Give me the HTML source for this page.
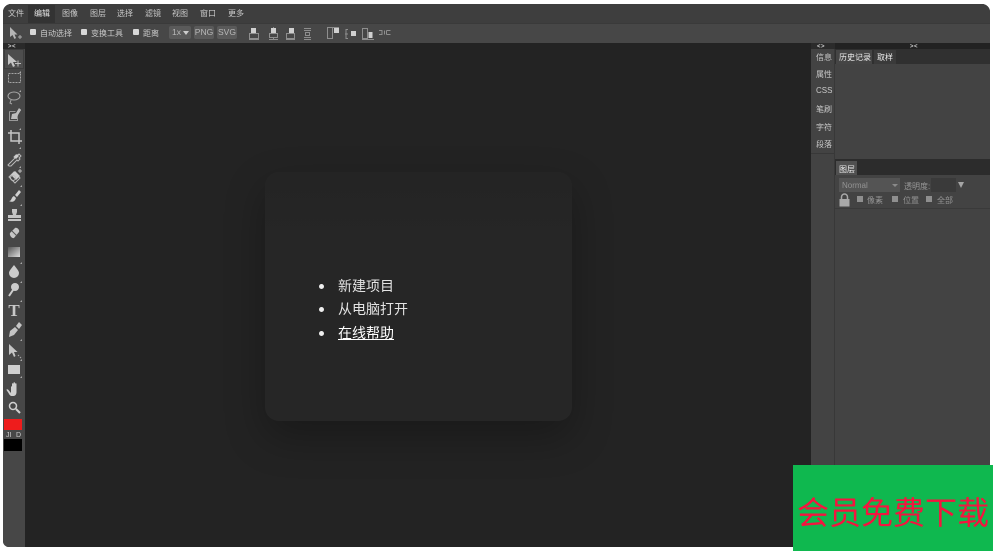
<!DOCTYPE html>
<html lang="zh"><head><meta charset="utf-8"><title>Photopea</title>
<style>
html,body{margin:0;padding:0;background:#fff;width:993px;height:551px;overflow:hidden}
body{position:relative;font-family:"Liberation Sans","Noto Sans CJK SC",sans-serif}
#app{position:absolute;left:3px;top:4px;width:987px;height:543px;background:#232323;border-radius:8px 8px 6px 6px;overflow:hidden}
.a{position:absolute;white-space:nowrap}
.t{position:absolute;white-space:nowrap;font-size:8px;line-height:12px;color:#cacaca;filter:blur(.3px);margin-top:.5px}
.cb{position:absolute;width:6px;height:6px;background:#d8d8d8;border-radius:1px}
.cb2{position:absolute;width:6px;height:6px;background:#8f8f8f}
svg{position:absolute;overflow:visible}
.btn{position:absolute;top:22px;height:13px;background:#5a5a5a;border-radius:2px;color:#b8b8b8;font-size:8.5px;line-height:13px;text-align:center;filter:blur(.3px)}
.arr{position:absolute;font-size:6px;line-height:6px;color:#ccc;font-weight:bold;letter-spacing:.5px}
.dot{position:absolute;left:54px;width:5px;height:5px;border-radius:50%;background:#eee}
.li{position:absolute;left:73px;font-size:14px;line-height:20px;color:#e4e4e4;white-space:nowrap}
</style></head><body>
<div id="app">
<!-- menu -->
<div class="a" style="left:0;top:0;width:987px;height:19px;background:#3e3e3e"></div>
<div class="a" style="left:25px;top:1px;width:27px;height:18px;background:#333"></div>
<div class="t" style="left:5px;top:3px">文件</div>
<div class="t" style="left:31px;top:3px;color:#e6e6e6">编辑</div>
<div class="t" style="left:59px;top:3px">图像</div>
<div class="t" style="left:87px;top:3px">图层</div>
<div class="t" style="left:114px;top:3px">选择</div>
<div class="t" style="left:142px;top:3px">滤镜</div>
<div class="t" style="left:169px;top:3px">视图</div>
<div class="t" style="left:197px;top:3px">窗口</div>
<div class="t" style="left:225px;top:3px">更多</div>
<!-- options -->
<div class="a" style="left:0;top:19px;width:987px;height:20px;background:#474747;border-top:1px solid #3a3a3a;box-sizing:border-box"></div>
<svg style="left:6px;top:23px;filter:blur(.3px)" width="14" height="13"><path d="M1 0 L1 10 L3.500 8 L5.500 12 L7 11 L5.500 7.500 L8.500 7.500 Z" fill="#b5b5b5"/><path d="M9 10h4M11 8v4" stroke="#aaa" fill="none"/></svg>
<div class="cb" style="left:27px;top:25px"></div><div class="t" style="left:37px;top:23px">自动选择</div>
<div class="cb" style="left:78px;top:25px"></div><div class="t" style="left:88px;top:23px">变换工具</div>
<div class="cb" style="left:130px;top:25px"></div><div class="t" style="left:140px;top:23px">距离</div>
<div class="btn" style="left:166px;width:22px;text-align:left;text-indent:3px">1x<span style="position:absolute;left:14px;top:5px;border:3.500px solid transparent;border-top:4px solid #ccc;border-bottom:0"></span></div>
<div class="btn" style="left:191px;width:20px">PNG</div>
<div class="btn" style="left:214px;width:20px">SVG</div>
<svg style="left:246px;top:23px;filter:blur(.3px)" width="145" height="16" fill="none" stroke="#8e8e8e" stroke-width="1">
<rect x="2" y="1" width="5" height="5" fill="#d0d0d0" stroke="none"/><rect x="0.500" y="6.500" width="9" height="5"/><path d="M0 12.500h10"/>
<rect x="22" y="1" width="5" height="5" fill="#d0d0d0" stroke="none"/><rect x="20.500" y="6.500" width="8" height="4"/><path d="M24.500 0v1M24.500 11v2M20 12.500h9"/>
<rect x="40" y="1" width="5" height="5" fill="#d0d0d0" stroke="none"/><rect x="37.500" y="6.500" width="8" height="5"/><path d="M37 12.500h9"/>
<path d="M55 1.500h7M55 3.500h7M55 10.500h7M55 12.500h7"/><rect x="56.500" y="5.500" width="4" height="3"/>
<rect x="78.500" y="0.500" width="5" height="11"/><path d="M78 0.500h12"/><rect x="85" y="1" width="5" height="5" fill="#d0d0d0" stroke="none"/>
<path d="M99 2.500h-2v9h2M99 7h-3"/><rect x="102" y="4" width="5" height="5" fill="#d0d0d0" stroke="none"/>
<rect x="113.500" y="1.500" width="5" height="10"/><rect x="119.500" y="5" width="4" height="6" fill="#d0d0d0" stroke="none"/><path d="M113 12.500h12"/>
<path d="M130 3.500h3v4h-3M135.500 3.500v4M137.500 3.500h4M137.500 7.500h4M137.500 3.500v4"/>
</svg>
<!-- left tools -->
<div class="a" style="left:0;top:39px;width:22px;height:504px;background:#474747"></div>
<div class="a" style="left:0;top:39px;width:22px;height:6px;background:#2a2a2a"></div>
<div class="arr" style="left:5px;top:40px">&gt;&lt;</div>
<div class="a" style="left:1px;top:45px;width:20px;height:20px;background:#4d4d4d;box-shadow:inset 0 0 0 1px #3d3d3d"></div>
<svg style="left:0;top:45px;filter:blur(.35px)" width="22" height="400" fill="#bdbdbd" stroke="none">
<path d="M5 5 L5 16 L8 13.500 L10 18 L12 17 L10 13 L14 13 Z" fill="#c5c5c5"/><path d="M12 14.500h6M15 11.500v6" stroke="#bdbdbd" fill="none"/>
<rect x="5.500" y="24.500" width="12" height="9" fill="none" stroke="#a5a5a5" stroke-dasharray="2 1"/>
<ellipse cx="11" cy="47" rx="6" ry="4" fill="none" stroke="#a5a5a5"/><path d="M8 51l-1 3 2 1" fill="none" stroke="#a5a5a5"/>
<path d="M8 70l1-5 4-1 3-5 2 2-3 5-1 4z"/><path d="M6.500 62.500h6M6.500 62.500v9h8v-3" fill="none" stroke="#999"/>
<path d="M8 81v11h11M5 84h11v11" fill="none" stroke="#c5c5c5" stroke-width="1.500"/>
<path d="M6 115l-1 1 1 1 2 0 6-6 1 1 2-2-1-1 2-2-2-2-2 2-1-1-2 2 1 1z" fill="none" stroke="#bbb"/><path d="M11 108l3-3 2 2-3 3z" fill="#ccc"/>
<path d="M6 128l5-5 6 6-5 5z" fill="none" stroke="#bbb"/><path d="M8 126l4-4 5 5-4 4z" fill="#ccc"/><path d="M15 122h4M17 120v4" stroke="#bbb"/><circle cx="10" cy="129" r="2.500" fill="none" stroke="#bbb"/>
<path d="M6 152c3 0 2-4 5-5l2 2c-1 3-3 5-7 3zM12 146l4-5 2 2-4 5z" fill="#d0d0d0"/>
<path d="M9 160h5v3l-1 3h5v3H5v-3h5l-1-3zM5 170h13v2H5z" fill="#c5c5c5"/>
<path d="M7 184 l5-5 c2-1 5 2 4 4 l-5 6 c-2 1-5-3-4-5z" fill="#c5c5c5"/><path d="M9 182l5 5" stroke="#555"/>
<defs><linearGradient id="g" x1="0" x2="1" y1="0" y2="1"><stop offset="0" stop-color="#555"/><stop offset="1" stop-color="#ddd"/></linearGradient></defs>
<rect x="5" y="198" width="12" height="10" fill="url(#g)"/>
<path d="M11 216c3 4 5 6 5 8a5 5 0 0 1-10 0c0-2 2-4 5-8z" fill="#ccc"/>
<circle cx="12" cy="238" r="4" fill="#ccc"/><path d="M10 241l-4 6" stroke="#ccc" stroke-width="2"/>
<path d="M6 288l1-6 5-4 3 3-4 5zM13 277l3-4 3 3-3 4z" fill="#c5c5c5"/>
<path d="M6 295 L6 306 L9 303.500 L11 308 L12.500 307 L11 303 L14.500 303 Z" fill="#c5c5c5"/><path d="M15 306l1 1M17 308l1 1" stroke="#aaa"/>
<rect x="5" y="316" width="12" height="9" fill="#cfcfcf"/>
<path d="M8 344v-6c0-1 1-1 1 0v4-7c0-1 1.500-1 1.500 0v6-7c0-1 1.500-1 1.500 0v7-6c0-1 1.500-1 1.500 0v8c0 2-1 4-3 4h-2c-1 0-2-1-3-3l-2-3c0-1 1-1 2 0z" fill="#d0d0d0"/>
<circle cx="10" cy="357" r="3.500" fill="none" stroke="#d0d0d0" stroke-width="1.500"/><path d="M13 360l4 4" stroke="#d0d0d0" stroke-width="2"/>
<path d="M18 22v2h-2zM18 41v2h-2zM18 60v2h-2zM18 79v2h-2zM18 98v2h-2zM18 117v2h-2zM19 136v2h-2zM19 155v2h-2zM19 213v2h-2zM19 232v2h-2zM19 251v2h-2zM19 290v2h-2zM19 310v2h-2zM19 327v2h-2z" fill="#aaa"/>
</svg>
<div class="a" style="left:4px;top:298px;font-family:'Liberation Serif',serif;font-size:17px;line-height:18px;color:#c8c8c8;font-weight:bold;width:14px;text-align:center">T</div>
<div class="a" style="left:1px;top:415px;width:18px;height:11px;background:#ee1c1c"></div>
<div class="t" style="left:3px;top:426px;font-size:7px;line-height:9px;color:#ccc">JI</div>
<div class="t" style="left:13px;top:426px;font-size:7px;line-height:9px;color:#ccc">D</div>
<div class="a" style="left:1px;top:435px;width:18px;height:12px;background:#000"></div>
<!-- right strip -->
<div class="a" style="left:808px;top:39px;width:179px;height:504px;background:#434343"></div>
<div class="a" style="left:808px;top:39px;width:24px;height:6px;background:#2b2b2b"></div>
<div class="a" style="left:832px;top:39px;width:155px;height:6px;background:#222"></div>
<div class="arr" style="left:814px;top:40px">&lt;&gt;</div>
<div class="arr" style="left:907px;top:40px">&gt;&lt;</div>
<div class="a" style="left:831px;top:45px;width:1px;height:498px;background:#383838"></div>
<div class="a" style="left:808px;top:149px;width:23px;height:1px;background:#383838"></div>
<div class="t" style="left:813px;top:47px">信息</div>
<div class="t" style="left:813px;top:64px">属性</div>
<div class="t" style="left:813px;top:80px">CSS</div>
<div class="t" style="left:813px;top:99px">笔刷</div>
<div class="t" style="left:813px;top:117px">字符</div>
<div class="t" style="left:813px;top:134px">段落</div>
<!-- history panel -->
<div class="a" style="left:832px;top:45px;width:155px;height:15px;background:#303030"></div>
<div class="a" style="left:833px;top:46px;width:36px;height:14px;background:#454545"></div>
<div class="a" style="left:871px;top:46px;width:22px;height:14px;background:#3a3a3a"></div>
<div class="t" style="left:836px;top:47px;color:#f0f0f0">历史记录</div>
<div class="t" style="left:874px;top:47px;color:#f0f0f0">取样</div>
<!-- layers panel -->
<div class="a" style="left:832px;top:155px;width:155px;height:16px;background:#2c2c2c"></div>
<div class="a" style="left:833px;top:157px;width:21px;height:14px;background:#505050"></div>
<div class="t" style="left:836px;top:159px;color:#f0f0f0">图层</div>
<div class="a" style="left:836px;top:174px;width:61px;height:14px;background:#545454"></div>
<div class="t" style="left:839px;top:175px;color:#949494">Normal</div>
<div class="a" style="left:889px;top:180px;border:3px solid transparent;border-top:3px solid #8a8a8a;border-bottom:0"></div>
<div class="t" style="left:901px;top:176px;color:#999">透明度:</div>
<div class="a" style="left:928px;top:174px;width:25px;height:14px;background:#3a3a3a"></div>
<div class="a" style="left:955px;top:178px;border:3px solid transparent;border-top:6px solid #a5a5a5;border-bottom:0"></div>
<svg style="left:835px;top:189px" width="14" height="14"><path d="M3.500 6V4a3 3 0 0 1 6 0v2" fill="none" stroke="#a8a8a8" stroke-width="1.500"/><rect x="1.500" y="6" width="10" height="7.500" fill="#a8a8a8"/></svg>
<div class="cb2" style="left:854px;top:192px"></div><div class="t" style="left:864px;top:190px;color:#959595">像素</div>
<div class="cb2" style="left:889px;top:192px"></div><div class="t" style="left:900px;top:190px;color:#959595">位置</div>
<div class="cb2" style="left:923px;top:192px"></div><div class="t" style="left:934px;top:190px;color:#959595">全部</div>
<div class="a" style="left:832px;top:204px;width:155px;height:1px;background:#3a3a3a"></div>
<!-- dialog -->
<div class="a" style="left:262px;top:168px;width:307px;height:249px;background:linear-gradient(#242424,#262626 30%);border-radius:14px;box-shadow:0 16px 40px rgba(0,0,0,.28)">
<div class="dot" style="top:112px"></div><div class="li" style="top:104px">新建项目</div>
<div class="dot" style="top:135px"></div><div class="li" style="top:127px">从电脑打开</div>
<div class="dot" style="top:159px"></div><div class="li" style="top:151px;color:#fff;text-decoration:underline">在线帮助</div>
</div>
</div>
<!-- green badge -->
<div class="a" style="left:793px;top:465px;width:200px;height:86px;background:#0fb84f"></div>
<div class="a" style="left:793px;top:489px;width:200px;height:48px;line-height:48px;text-align:center;font-size:32px;color:#f5143f;font-family:'Liberation Sans','WenQuanYi Zen Hei','Noto Sans CJK SC',sans-serif">会员免费下载</div>
</body></html>
